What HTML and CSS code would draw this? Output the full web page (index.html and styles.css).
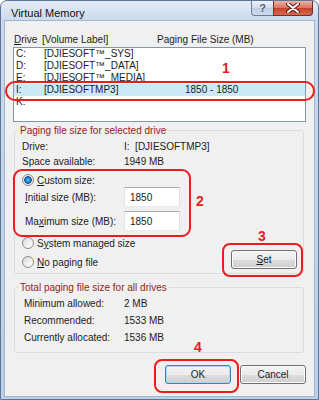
FILE: index.html
```html
<!doctype html>
<html>
    <head>
        <meta charset="utf-8">
        <title>Virtual Memory</title>
        <link rel="stylesheet" href="styles.css">
    </head>
    <body>
        <div class="window">
            <div class="titlebar">
                <span class="title">Virtual Memory</span>
                <div class="caption">
                    <span class="cap help">?</span>
                    <span class="cap close">
                        <svg width="14" height="10" viewBox="0 0 14 10">
                            <path d="M2 1 L12 9 M12 1 L2 9" stroke="#5a1a10" stroke-width="4" stroke-linecap="round"/>
                            <path d="M2 1 L12 9 M12 1 L2 9" stroke="#fff" stroke-width="2" stroke-linecap="round"/>
                        </svg>
                    </span>
                </div>
            </div>

            <div class="client">
                <div class="list-head">
                    <span><u>D</u>rive</span>
                    <span>[Volume Label]</span>
                    <span>Paging File Size (MB)</span>
                </div>
                <div class="listbox">
                    <div class="row"><span>C:</span><span>[DJIESOFT™_SYS]</span><span></span></div>
                    <div class="row"><span>D:</span><span>[DJIESOFT™_DATA]</span><span></span></div>
                    <div class="row"><span>E:</span><span>[DJIESOFT™_MEDIA]</span><span></span></div>
                    <div class="row selected"><span>I:</span><span>[DJIESOFTMP3]</span><span>1850 - 1850</span></div>
                    <div class="row"><span>K:</span><span></span><span></span></div>
                </div>

                <fieldset class="group">
                    <legend>Paging file size for selected drive</legend>
                    <div class="group-body">
                        <div class="info"><span>Drive:</span><span>I:&nbsp; [DJIESOFTMP3]</span></div>
                        <div class="info"><span>Space available:</span><span>1949 MB</span></div>
                        <div class="option first"><span class="radio checked"></span><span><u>C</u>ustom size:</span></div>
                        <div class="size-row"><span><u>I</u>nitial size (MB):</span><input class="field" value="1850"></div>
                        <div class="size-row"><span>Ma<u>x</u>imum size (MB):</span><input class="field" value="1850"></div>
                        <div class="bottom-row">
                            <div class="options">
                                <div class="option"><span class="radio"></span><span>S<u>y</u>stem managed size</span></div>
                                <div class="option"><span class="radio"></span><span><u>N</u>o paging file</span></div>
                            </div>
                            <button class="btn"><u>S</u>et</button>
                        </div>
                    </div>
                </fieldset>

                <fieldset class="group totals">
                    <legend>Total paging file size for all drives</legend>
                    <div class="group-body">
                        <div class="total"><span>Minimum allowed:</span><span>2 MB</span></div>
                        <div class="total"><span>Recommended:</span><span>1533 MB</span></div>
                        <div class="total"><span>Currently allocated:</span><span>1536 MB</span></div>
                    </div>
                </fieldset>

                <div class="actions">
                    <button class="btn default">OK</button>
                    <button class="btn">Cancel</button>
                </div>
            </div>
        </div>

        <!-- red annotations drawn over the dialog -->
        <div class="note ring1"></div>
        <div class="note ring2"></div>
        <div class="note ring3"></div>
        <div class="note ring4"></div>
        <span class="num n1">1</span>
        <span class="num n2">2</span>
        <span class="num n3">3</span>
        <span class="num n4">4</span>
    </body>
</html>
```

FILE: styles.css
```css
body {
    margin: 0;
    font-family: "Liberation Sans", Arial, sans-serif;
    font-size: 10px;
    color: #1c1c1c;
    background-color: #fff;
}

div.window {
    width: 319px;
    height: 400px;
    box-sizing: border-box;
    display: flex;
    flex-direction: column;
    padding: 0 3px 2px 3px;
    border: 1px solid #5d7697;
    border-radius: 7px 7px 0 0;
    background: linear-gradient(#e4ecf7, #cad9ee 20px, #bccfe8);
}

div.titlebar {
    height: 19px;
    display: flex;
    justify-content: space-between;
}
span.title {
    padding: 6px 0 0 7px;
    font-size: 11px;
    line-height: 13px;
    color: #111;
}
div.caption {
    display: flex;
    margin-right: 2px;
    height: 15px;
}
span.cap {
    display: flex;
    align-items: center;
    justify-content: center;
    height: 15px;
    box-sizing: border-box;
    border: 1px solid #6b7c95;
    border-top: 0;
}
span.help {
    width: 22px;
    border-right: 0;
    border-radius: 0 0 0 4px;
    background: linear-gradient(#eef2f8, #d3dcea 50%, #c1cde0 51%, #cfd9e8);
    color: #55657c;
    font-weight: bold;
    font-size: 11px;
}
span.close {
    width: 40px;
    border-color: #7a2a20;
    border-radius: 0 0 4px 0;
    background: linear-gradient(#edb3a5, #d9725d 50%, #c2412a 51%, #d66a4c);
}

div.client {
    flex: 1;
    padding: 13px 8px 0 8px;
    border: 1px solid #a3b6d0;
    background-color: #f0f0f0;
}

div.list-head {
    display: grid;
    grid-template-columns: 28px 115px 1fr;
    padding-left: 1px;
    line-height: 12px;
    white-space: nowrap;
}

div.listbox {
    margin-top: 1px;
    height: 75px;
    box-sizing: border-box;
    border: 1px solid #8595ac;
    background-color: #fff;
}
div.row {
    display: grid;
    grid-template-columns: 28px 141px 1fr;
    padding-left: 2px;
    line-height: 12px;
    height: 12px;
    white-space: nowrap;
}
div.row.selected {
    background-color: #cde8f7;
}

fieldset.group {
    margin: 3px 2px 0 1px;
    padding: 0;
    min-inline-size: 0;
    border: 1px solid #d5dfe5;
    border-radius: 3px;
}
fieldset.group legend {
    margin-left: 3px;
    padding: 0 2px;
    line-height: 11px;
    color: #952222;
}
div.group-body {
    padding: 3px 6px 4px 7px;
}

div.info {
    display: grid;
    grid-template-columns: 102px 1fr;
    line-height: 15px;
}

div.option {
    display: flex;
    align-items: center;
    gap: 3px;
    height: 14px;
}
div.option.first {
    margin-top: 4px;
}
span.radio {
    width: 12px;
    height: 12px;
    box-sizing: border-box;
    border-radius: 50%;
    border: 1px solid #8b8b8b;
    background: linear-gradient(135deg, #d6d6d6, #f7f7f7 70%);
}
span.radio.checked {
    background: radial-gradient(circle, #6fd0ff 0, #1f86d6 2px, #0c4f8e 3.5px, #e8e8e8 4px, #f7f7f7 6px);
}

div.size-row {
    display: grid;
    grid-template-columns: 99px 56px;
    align-items: center;
    padding-left: 3px;
    height: 20px;
}
div.size-row + div.size-row {
    margin-top: 4px;
}
input.field {
    width: 56px;
    height: 20px;
    box-sizing: border-box;
    padding: 0 0 0 5px;
    border: 1px solid #abadb3;
    border-color: #abadb3 #dbdfe6 #e3e9ef #e2e3ea;
    font: inherit;
    color: #1c1c1c;
    background-color: #fff;
}

div.bottom-row {
    display: flex;
    justify-content: space-between;
    align-items: flex-end;
    margin-top: 5px;
}
div.options {
    display: flex;
    flex-direction: column;
    gap: 5px;
}

button.btn {
    width: 66px;
    height: 19px;
    padding: 0;
    box-sizing: border-box;
    border: 1px solid #707070;
    border-radius: 3px;
    background: linear-gradient(#f3f3f3, #ebebeb 50%, #dddddd 51%, #cfcfcf);
    box-shadow: inset 0 0 0 1px #fbfbfb;
    font: inherit;
    color: #1c1c1c;
}
button.btn.default {
    border-color: #3c7fb1;
    box-shadow: inset 0 0 0 1px #a9dcf3;
}

fieldset.totals {
    margin-top: 8px;
}
fieldset.totals div.group-body {
    padding: 2px 6px 6px 9px;
}
div.total {
    display: grid;
    grid-template-columns: 100px 1fr;
    line-height: 17px;
}

div.actions {
    display: flex;
    justify-content: flex-end;
    gap: 9px;
    margin-top: 12px;
}

div.note {
    position: absolute;
    border: 2px solid #ec1c1c;
    box-sizing: border-box;
}
div.ring1 { left: 5px; top: 81px; width: 310px; height: 20px; border-radius: 10px; }
div.ring2 { left: 13px; top: 169px; width: 178px; height: 68px; border-radius: 9px; }
div.ring3 { left: 222px; top: 243px; width: 81px; height: 34px; border-radius: 8px; }
div.ring4 { left: 154px; top: 359px; width: 85px; height: 34px; border-radius: 8px; }

span.num {
    position: absolute;
    font-size: 14px;
    font-weight: bold;
    line-height: 14px;
    color: #ec1c1c;
}
span.n1 { left: 222px; top: 61px; }
span.n2 { left: 196px; top: 194px; }
span.n3 { left: 258px; top: 229px; }
span.n4 { left: 194px; top: 340px; }
```
